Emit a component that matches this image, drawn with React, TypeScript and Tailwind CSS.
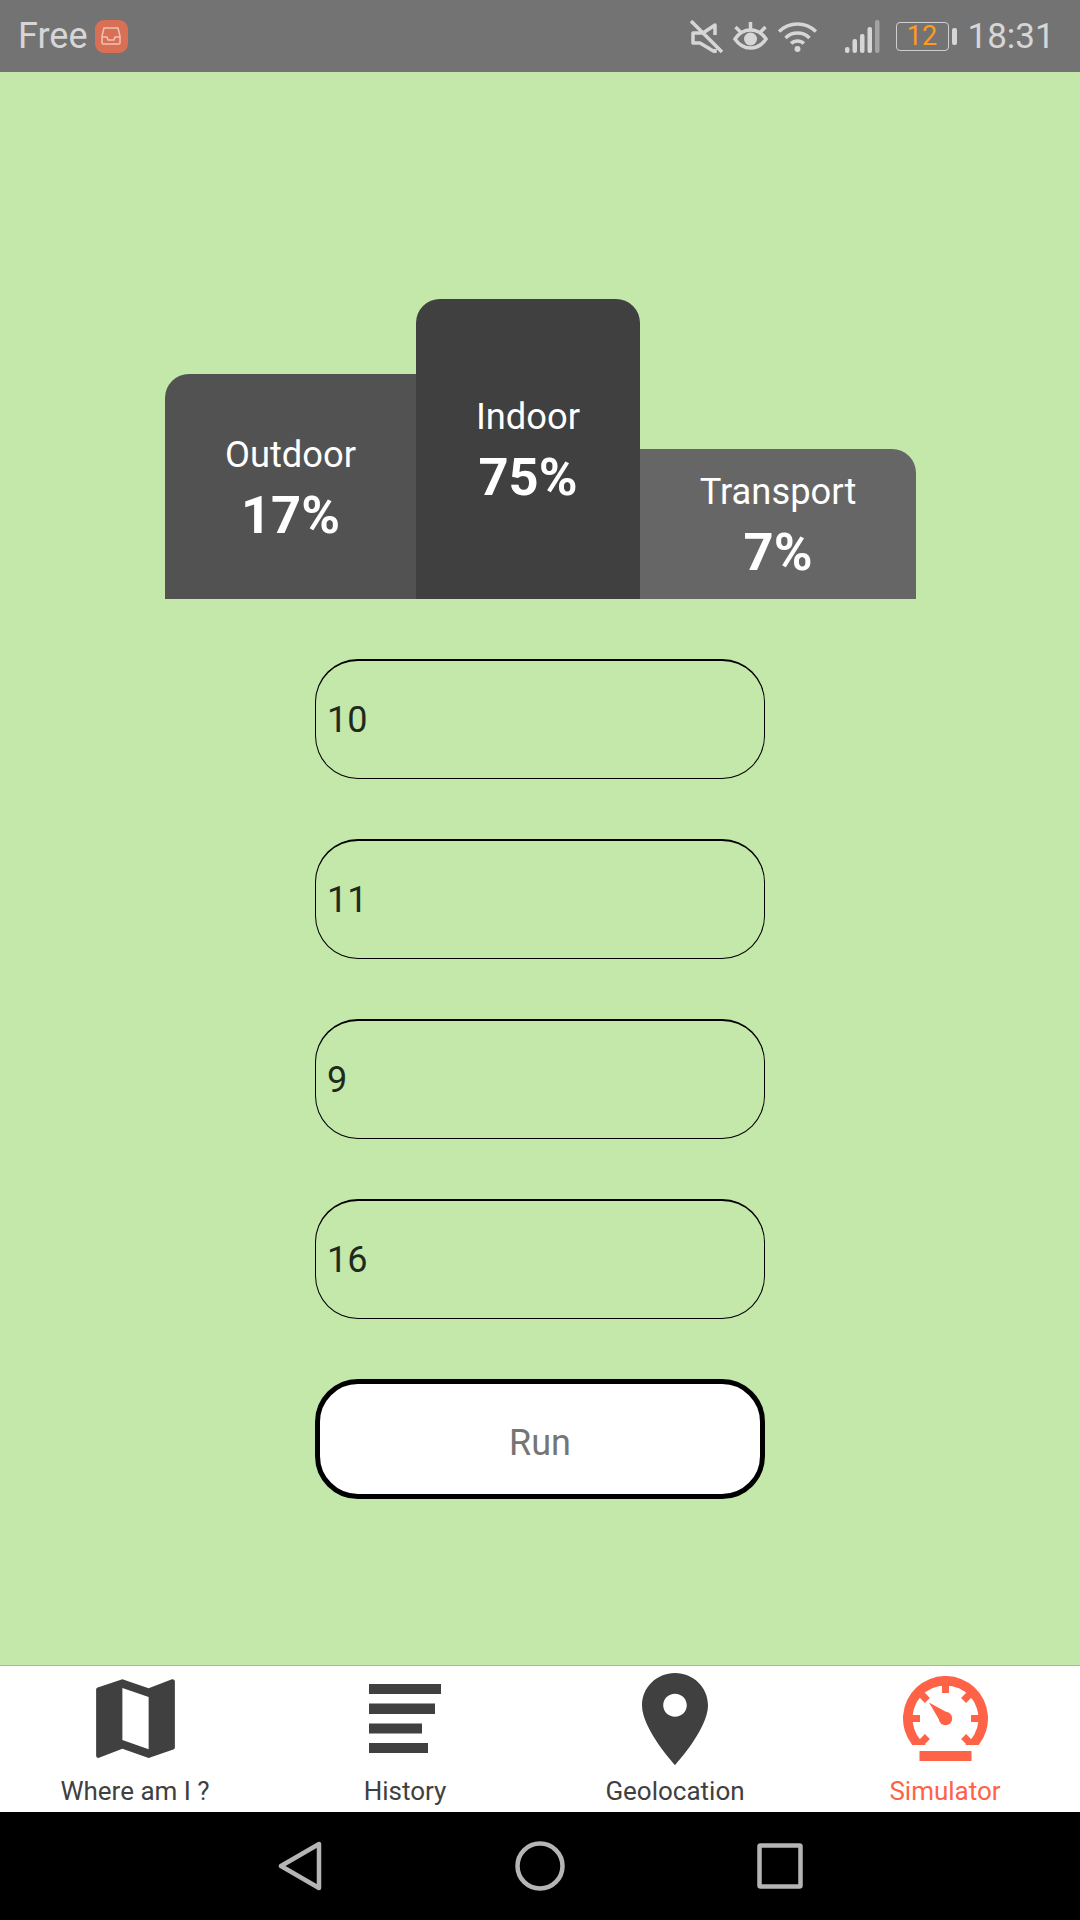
const fields = ["10", "11", "9", "16"];

const podium = [
  { label: "Outdoor", value: "17%", box: "w-[251px] h-[225px] bg-[#525252]", corner: "rounded-tl-[24px]" },
  { label: "Indoor", value: "75%", box: "w-[224px] h-[300px] bg-[#404040]", corner: "rounded-t-[24px]" },
  { label: "Transport", value: "7%", box: "w-[276px] h-[150px] bg-[#666666]", corner: "rounded-tr-[24px]" },
];

const StatusBar = () => (
  <div className="h-[72px] shrink-0 bg-[#737373] flex items-center text-[#d6d6d6]">
    <span className="ml-[18px] text-[36px] leading-none">Free</span>
    <div className="ml-[7px] w-[33px] h-[33px] rounded-[9px] bg-[#d96f55] flex items-center justify-center">
      <svg width="22" height="18" viewBox="0 0 22 18" fill="none" stroke="#eec3b5" strokeWidth="1.5">
        <path d="M4 1h14l2 8v7a1 1 0 0 1-1 1H3a1 1 0 0 1-1-1V9z" />
        <path d="M2 10h5l1 3h6l1-3h5" />
      </svg>
    </div>
    <svg className="ml-[562px]" width="33" height="33" viewBox="0 0 33 33" fill="none" stroke="#d6d6d6" strokeWidth="3.5">
      <path d="M25 15V5L13 13H3v10h7l15 9v-3" strokeLinejoin="round" />
      <path d="M1 1l31 31" />
    </svg>
    <svg className="ml-[10px]" width="35" height="33" viewBox="0 0 35 33" fill="none" stroke="#d6d6d6" strokeWidth="3.5">
      <path d="M2 19c8-12 23-12 31 0-8 12-23 12-31 0z" />
      <circle cx="17.5" cy="19" r="6.5" fill="#d6d6d6" stroke="none" />
      <path d="M17.5 2v7M2.5 7l6 6M32.5 7l-6 6" />
    </svg>
    <svg className="ml-[10px]" width="39" height="33" viewBox="0 0 39 33" fill="none" stroke="#d6d6d6" strokeWidth="3.5">
      <path d="M1.1 11.6a26 26 0 0 1 36.8 0" />
      <path d="M7.5 18a17 17 0 0 1 24 0" />
      <path d="M13.1 23.6a9 9 0 0 1 12.8 0" />
      <circle cx="19.5" cy="29" r="3" fill="#d6d6d6" stroke="none" />
    </svg>
    <svg className="ml-[28px]" width="35" height="33" viewBox="0 0 35 33" fill="#d6d6d6">
      <rect x="0" y="27" width="4.5" height="6" rx="2" />
      <rect x="7.5" y="19" width="4.5" height="14" rx="2" />
      <rect x="15" y="14" width="4.5" height="19" rx="2" />
      <rect x="22.5" y="7" width="4.5" height="26" rx="2" />
      <rect x="30" y="0" width="4.5" height="33" rx="2" fill="#a3a3a3" />
    </svg>
    <div className="ml-[16px] w-[53px] h-[29px] border border-[#cfcfcf] rounded-[4px] flex items-center justify-center text-[27px] leading-none text-[#ff9a1f]">
      12
    </div>
    <div className="ml-[3px] w-[5px] h-[17px] rounded-[2px] bg-[#d6d6d6]" />
    <span className="ml-[11px] text-[35px] leading-none">18:31</span>
  </div>
);

const MapIcon = () => (
  <svg width="105" height="105" viewBox="0 0 24 24" fill="#404040">
    <path d="M20.5 3l-.16.03L15 5.1 9 3 3.36 4.9c-.21.07-.36.25-.36.48V20.5c0 .28.22.5.5.5l.16-.03L9 18.9l6 2.1 5.64-1.9c.21-.07.36-.25.36-.48V3.5c0-.28-.22-.5-.5-.5zM15 19l-6-2.11V5l6 2.11V19z" />
  </svg>
);

const HistoryIcon = () => (
  <svg width="72" height="69" viewBox="0 0 72 69" fill="#404040">
    <rect x="0" y="0" width="72" height="10" />
    <rect x="0" y="19.5" width="66" height="10.5" />
    <rect x="0" y="39.5" width="53" height="10" />
    <rect x="0" y="59" width="59" height="10" />
  </svg>
);

const PinIcon = () => (
  <svg width="66" height="92" viewBox="5 2 14 20" preserveAspectRatio="none" fill="#404040">
    <path d="M12 2C8.13 2 5 5.13 5 9c0 5.25 7 13 7 13s7-7.75 7-13c0-3.87-3.13-7-7-7zm0 9.5c-1.38 0-2.5-1.12-2.5-2.5s1.12-2.5 2.5-2.5 2.5 1.12 2.5 2.5-1.12 2.5-2.5 2.5z" />
  </svg>
);

const GaugeIcon = () => (
  <svg width="85" height="85" viewBox="0 0 85 85" fill="#ff6347">
    <path d="M9.3 69A42.5 42.5 0 1 1 75.7 69H62.2A33 33 0 1 0 22.8 69z" />
    <rect x="39" y="9" width="7" height="8" />
    <rect x="9" y="39" width="8" height="7" />
    <rect x="68" y="39" width="8" height="7" />
    <path d="M21.3 16.3L26.9 21.9 21.9 26.9 16.3 21.3z" />
    <path d="M63.7 16.3L58.1 21.9 63.1 26.9 68.7 21.3z" />
    <path d="M21.3 68.7L26.9 63.1 21.9 58.1 16.3 63.7z" />
    <path d="M63.7 68.7L58.1 63.1 63.1 58.1 68.7 63.7z" />
    <circle cx="42.5" cy="42.5" r="6.7" />
    <path d="M26 26.5L47 38 38 47z" />
    <rect x="16.5" y="75" width="52" height="10" />
  </svg>
);

const tabs = [
  { label: "Where am I ?", icon: <MapIcon />, color: "text-[#404040]" },
  { label: "History", icon: <HistoryIcon />, color: "text-[#404040]" },
  { label: "Geolocation", icon: <PinIcon />, color: "text-[#404040]" },
  { label: "Simulator", icon: <GaugeIcon />, color: "text-[#ff6347]" },
];

export default function App() {
  return (
    <div className="w-[1080px] h-[1920px] flex flex-col bg-[#c4e8aa] font-[Roboto,sans-serif] overflow-hidden">
      <StatusBar />

      <main className="flex-1 flex flex-col items-center pt-[227px]">
        <div className="flex items-end">
          {podium.map((p) => (
            <div key={p.label} className={`${p.box} ${p.corner} pl-[1px] pt-[2px] flex flex-col items-center justify-center text-white`}>
              <span className="text-[36.3px] leading-[48px]">{p.label}</span>
              <span className="mt-[6px] text-[52.5px] leading-[60px] font-bold">{p.value}</span>
            </div>
          ))}
        </div>

        <div className="mt-[60px] flex flex-col gap-[60px]">
          {fields.map((f) => (
            <input
              key={f}
              readOnly
              value={f}
              className="w-[450px] h-[120px] rounded-[43px] border border-t-2 border-black bg-transparent pl-[11px] text-[36px] text-[#1f2a1c] outline-none"
            />
          ))}
          <button className="w-[450px] h-[120px] pt-[7px] rounded-[43px] border-[5px] border-black bg-white text-[36px] text-[#757575]">
            Run
          </button>
        </div>
      </main>

      <nav className="h-[147px] shrink-0 bg-white border-t border-[#b3b3b3] flex">
        {tabs.map((t) => (
          <div key={t.label} className="w-[270px] flex flex-col items-center">
            <div className="h-[105px] flex items-center justify-center">{t.icon}</div>
            <span className={`pt-[3px] text-[26px] leading-[34px] ${t.color}`}>{t.label}</span>
          </div>
        ))}
      </nav>

      <div className="h-[108px] shrink-0 bg-black flex items-center justify-center">
        <svg width="44" height="50" viewBox="0 0 44 50" fill="none" stroke="#b5b5b5" strokeWidth="4.5" strokeLinejoin="round">
          <path d="M41 3v44L3 25z" />
        </svg>
        <svg className="ml-[193px]" width="50" height="50" viewBox="0 0 50 50" fill="none" stroke="#b5b5b5" strokeWidth="4.5">
          <circle cx="25" cy="25" r="22.5" />
        </svg>
        <svg className="ml-[192px]" width="46" height="46" viewBox="0 0 46 46" fill="none" stroke="#b5b5b5" strokeWidth="4.5" strokeLinejoin="round">
          <rect x="2.5" y="2.5" width="41" height="41" rx="1" />
        </svg>
      </div>
    </div>
  );
}
